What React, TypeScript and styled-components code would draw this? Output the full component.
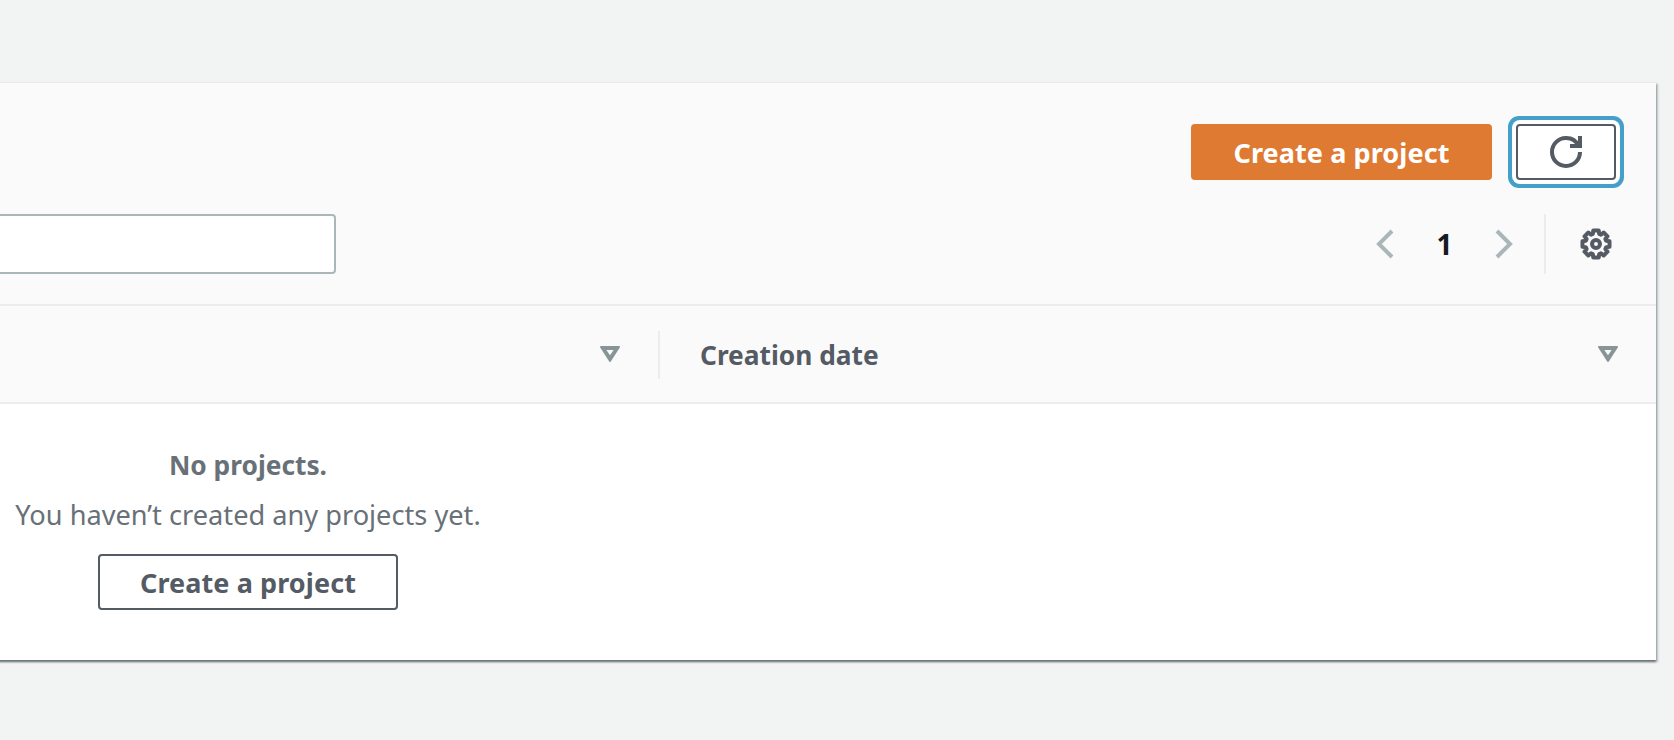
import React from "react";
import styled, { createGlobalStyle } from "styled-components";

const Global = createGlobalStyle`
  html, body { margin: 0; padding: 0; background: #f2f3f3; overflow: hidden; }
  body { font-family: "Noto Sans", "Open Sans", sans-serif; }
  #root { width: 1674px; height: 740px; overflow: hidden; }
`;

const Page = styled.div`
  height: 740px;
  padding-top: 82px;
  box-sizing: border-box;
`;

const Panel = styled.section`
  width: 2816px;
  height: 578px;
  margin-left: -1160px;
  background: #fff;
  border-top: 1px solid #eaeded;
  box-sizing: border-box;
  box-shadow: 0 2px 2px 0 rgba(0, 28, 36, 0.5), 2px 2px 2px 0 rgba(0, 28, 36, 0.2);
  display: flex;
  flex-direction: column;
`;

const Toolbar = styled.header`
  height: 223px;
  box-sizing: border-box;
  background: #fafafa;
  border-bottom: 2px solid #eaeded;
  padding: 41px 40px 0 0;
  display: flex;
  flex-direction: column;
  gap: 34px;
`;

const Actions = styled.div`
  display: flex;
  justify-content: flex-end;
  gap: 24px;
  height: 56px;
`;

const Button = styled.button<{ $variant: "primary" | "normal" }>`
  height: 56px;
  width: ${(p) => (p.$variant === "primary" ? "301px" : "300px")};
  box-sizing: border-box;
  border-radius: 4px;
  border: ${(p) => (p.$variant === "primary" ? "none" : "2px solid #545b64")};
  background: ${(p) => (p.$variant === "primary" ? "#df7a33" : "#fff")};
  color: ${(p) => (p.$variant === "primary" ? "#fff" : "#545b64")};
  font: 700 27px/1 "Noto Sans", sans-serif;
  letter-spacing: 0.1px;
  padding: 0;
  display: flex;
  align-items: center;
  justify-content: center;
`;

const RefreshButton = styled.button`
  width: 100px;
  height: 56px;
  box-sizing: border-box;
  border: 2px solid #545b64;
  border-radius: 4px;
  background: #fff;
  color: #545b64;
  padding: 0;
  display: flex;
  align-items: center;
  justify-content: center;
  box-shadow: 0 0 0 4px #fff, 0 0 0 8px #44a0c8;
`;

const FilterRow = styled.div`
  display: flex;
  align-items: center;
  height: 60px;
`;

const FilterInput = styled.input`
  width: 1496px;
  height: 60px;
  margin-right: auto;
  box-sizing: border-box;
  background: #fff;
  border: 2px solid #aab7b8;
  border-radius: 4px;
`;

const Pager = styled.nav`
  display: flex;
  align-items: center;
  color: #aab7b8;
`;

const PageNumber = styled.span`
  width: 87px;
  text-align: center;
  font: 700 28px/1 "Noto Sans", sans-serif;
  color: #16191f;
`;

const Divider = styled.span`
  width: 2px;
  height: 60px;
  background: #eaeded;
  margin: 0 34px 0 24px;
`;

const SettingsIcon = styled.span`
  display: flex;
  color: #545b64;
  margin-right: 4px;
`;

const HeaderRow = styled.div`
  height: 98px;
  box-sizing: border-box;
  background: #fafafa;
  border-bottom: 2px solid #eaeded;
  display: grid;
  grid-template-columns: 1818px 1fr;
`;

const HeaderCell = styled.div`
  display: flex;
  align-items: center;
  justify-content: flex-end;
  position: relative;
  padding-right: 38px;
`;

const HeaderCellLast = styled(HeaderCell)`
  justify-content: space-between;
  padding: 0 38px 0 42px;
  &::before {
    content: "";
    position: absolute;
    left: 0;
    top: 25px;
    height: 48px;
    width: 2px;
    background: #eaeded;
  }
`;

const ColumnTitle = styled.span`
  font: 700 26.3px/1 "Noto Sans", sans-serif;
  color: #545b64;
  margin-top: 2px;
`;

const Empty = styled.div`
  flex: 1;
  display: flex;
  flex-direction: column;
  align-items: center;
  padding-top: 41px;
`;

const EmptyTitle = styled.strong`
  font: 700 26.3px/40px "Noto Sans", sans-serif;
  color: #687078;
`;

const EmptyText = styled.p`
  font: 400 27.2px/40px "Noto Sans", sans-serif;
  color: #687078;
  margin: 10px 0 19px;
`;

const Icon = styled.svg`
  width: 32px;
  height: 32px;
  display: block;
  flex: none;
  fill: none;
  stroke: currentColor;
  stroke-width: 2;
`;

const SortGlyph = styled.svg`
  width: 20px;
  height: 16px;
  display: block;
  flex: none;
  color: #879596;
`;

function gearPath() {
  const pts: string[] = [];
  const teeth = 8;
  for (let i = 0; i < teeth; i++) {
    const a = ((i * 360) / teeth) * (Math.PI / 180);
    const spots: [number, number][] = [
      [5.3, -0.3],
      [6.9, -0.2],
      [6.9, 0.2],
      [5.3, 0.3],
    ];
    for (const [r, d] of spots) {
      pts.push(`${(8 + r * Math.cos(a + d)).toFixed(2)} ${(8 + r * Math.sin(a + d)).toFixed(2)}`);
    }
  }
  return "M" + pts.join("L") + "Z";
}

const Refresh = () => (
  <Icon viewBox="0 0 16 16">
    <path d="M10 5h5V0" />
    <path d="M15 8a6.96 6.96 0 0 1-7 7 6.96 6.96 0 0 1-7-7 6.96 6.96 0 0 1 7-7 6.87 6.87 0 0 1 6.3 4" />
  </Icon>
);

const Gear = () => (
  <Icon viewBox="0 0 16 16" strokeLinejoin="round">
    <path d={gearPath()} />
    <circle cx="8" cy="8" r="2" />
  </Icon>
);

const Sort = () => (
  <SortGlyph viewBox="0 0 20 16">
    <path fillRule="evenodd" fill="currentColor" d="M0 1a1 1 0 0 1 1-1h18a1 1 0 0 1 .8 1.5l-9 14a1 1 0 0 1-1.6 0l-9-14A1 1 0 0 1 0 1zM6.4 4l3.6 5.2L13.6 4z" />
  </SortGlyph>
);

export default function App() {
  return (
    <Page>
      <Global />
      <Panel>
        <Toolbar>
          <Actions>
            <Button $variant="primary">Create a project</Button>
            <RefreshButton aria-label="Refresh">
              <Refresh />
            </RefreshButton>
          </Actions>
          <FilterRow>
            <FilterInput aria-label="Filter projects" />
            <Pager>
              <Icon viewBox="0 0 16 16">
                <path d="M11.5 1.5 5 8l6.5 6.5" />
              </Icon>
              <PageNumber>1</PageNumber>
              <Icon viewBox="0 0 16 16">
                <path d="M4.5 1.5 11 8l-6.5 6.5" />
              </Icon>
            </Pager>
            <Divider />
            <SettingsIcon>
              <Gear />
            </SettingsIcon>
          </FilterRow>
        </Toolbar>
        <HeaderRow>
          <HeaderCell>
            <Sort />
          </HeaderCell>
          <HeaderCellLast>
            <ColumnTitle>Creation date</ColumnTitle>
            <Sort />
          </HeaderCellLast>
        </HeaderRow>
        <Empty>
          <EmptyTitle>No projects.</EmptyTitle>
          <EmptyText>You haven’t created any projects yet.</EmptyText>
          <Button $variant="normal">Create a project</Button>
        </Empty>
      </Panel>
    </Page>
  );
}
